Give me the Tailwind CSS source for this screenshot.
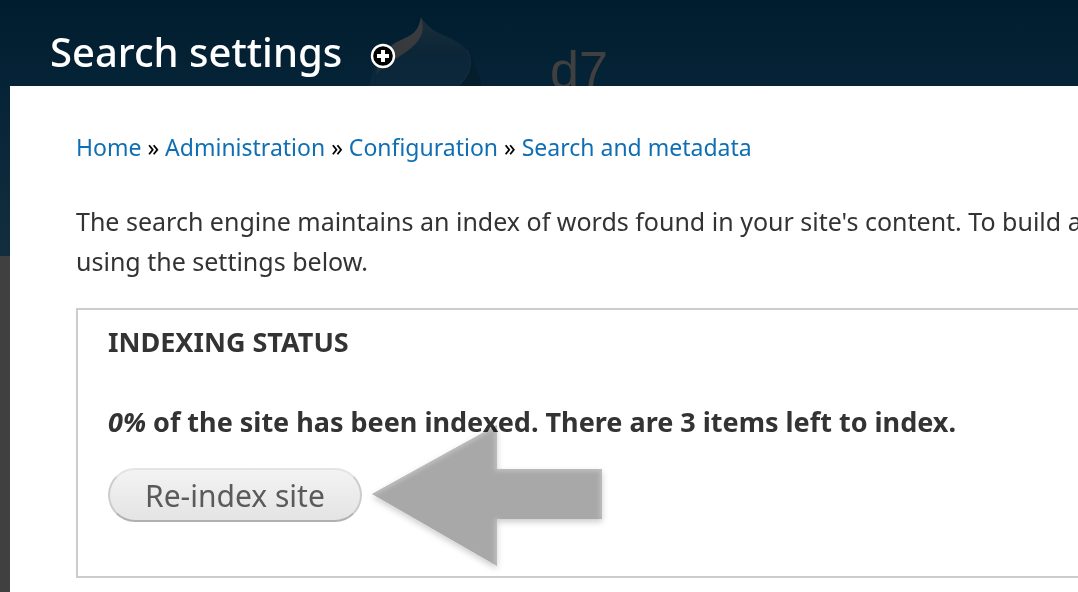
<!DOCTYPE html>
<html lang="en">
  <head>
    <meta charset="UTF-8" />
    <meta name="viewport" content="width=device-width, initial-scale=1.0" />
    <title>Search settings | d7</title>
    <script src="https://cdn.jsdelivr.net/npm/@tailwindcss/browser@4"></script>
  </head>
  <body class="bg-[#404040] font-['Noto_Sans','Open_Sans',sans-serif] text-[#333]">
    <div class="relative min-h-screen overflow-hidden">
      <!-- dimmed site behind the overlay -->
      <div
        class="absolute inset-x-0 top-0 h-64 bg-linear-to-b from-[#001d2e] via-[#062437] via-35% to-[#122e3e]"
        aria-hidden="true"
      >
        <svg class="absolute left-[368px] top-4" width="116" height="140" viewBox="0 0 116 140">
          <defs>
            <linearGradient id="drop" x1="0" y1="0" x2="0" y2="1">
              <stop offset="0" stop-color="#1d2e39" />
              <stop offset="0.25" stop-color="#0c2638" />
              <stop offset="1" stop-color="#0a2a42" />
            </linearGradient>
            <linearGradient id="shine" x1="1" y1="0" x2="0" y2="1">
              <stop offset="0" stop-color="#3a3d3f" />
              <stop offset="0.7" stop-color="#36393b" />
              <stop offset="1" stop-color="#132b3a" />
            </linearGradient>
          </defs>
          <path
            d="M53 1C55 5 59 9 64 13C71 18 76 19 82 22C89 26 95 29 99 34C103 39 106 46 107 51C112 58 114 65 114 76C112 112 90 138 57 138C24 138 1 112 1 74C2 62 5 53 12 44C17 36 21 31 27 27C36 22 46 20 50 11C52 7 52 4 53 1Z"
            fill="url(#drop)"
          />
          <path
            d="M99 34C103 39 106 46 107 51C112 58 114 65 114 76H86C96 66 102 57 102 47C102 42 101 38 99 34Z"
            fill="#051e2e"
          />
          <path
            d="M99 34C102 40 103 45 102 50C101 57 97 63 92 68"
            fill="none"
            stroke="#1c303d"
            stroke-width="1"
          />
          <path
            d="M53 2C55 7 55 12 54 17C52 23 48 28 43 32C37 37 32 40 27 43C20 47 14 51 8 60C9 51 10 47 12 44C17 36 21 31 27 27C36 22 46 20 50 11C52 7 52 5 53 2Z"
            fill="url(#shine)"
          />
        </svg>
        <div
          class="absolute left-[550px] top-10 font-['Liberation_Sans',Arial,sans-serif] text-[52px] leading-[60px] text-[#404040]"
        >
          d7
        </div>
      </div>

      <div class="relative flex min-h-screen flex-col">
        <header class="flex items-end gap-7 px-[50px] pt-[25px] pb-[7px]">
          <h1 class="text-[40px] leading-[54px] font-medium text-white">Search settings</h1>
          <button type="button" class="mb-[10px]" aria-label="Add to shortcuts">
            <svg width="26" height="26" viewBox="0 0 26 26">
              <circle cx="13" cy="13" r="11" fill="#000" stroke="#fff" stroke-width="2.4" />
              <path d="M11 7h4v4h4v4h-4v4h-4v-4H7v-4h4z" fill="#fff" />
            </svg>
          </button>
        </header>

        <main class="ml-[10px] grow bg-white pl-[66px] pt-[43px]">
          <nav class="text-[23px] leading-9 whitespace-nowrap text-black" aria-label="Breadcrumb">
            <a href="#" class="text-[#0f6fb4]">Home</a> »
            <a href="#" class="text-[#0f6fb4]">Administration</a> »
            <a href="#" class="text-[#0f6fb4]">Configuration</a> »
            <a href="#" class="text-[#0f6fb4]">Search and metadata</a>
          </nav>

          <p class="mt-9 text-[25px] leading-10 whitespace-nowrap">
            The search engine maintains an index of words found in your site's content. To build a
            <br />using the settings below.
          </p>

          <section
            class="mt-[27px] border-2 border-r-0 border-[#ccc] pt-[14px] pb-[54px] pl-[30px]"
            aria-labelledby="status"
          >
            <h2 id="status" class="text-[27px] leading-9 font-bold uppercase">Indexing status</h2>
            <p class="mt-11 text-[27px] leading-9 font-bold whitespace-nowrap">
              <em>0%</em> of the site has been indexed. There are 3 items left to index.
            </p>
            <div class="relative mt-7">
              <button
                type="button"
                class="rounded-full border-2 border-[#ccc] border-t-[#e4e4e4] border-b-[#b0b0b0] bg-linear-to-b from-[#f3f3f3] to-[#e4e4e4] px-[35px] pt-2 pb-[6px] text-[30px] leading-9 text-[#5a5a5a]"
              >
                Re-index site
              </button>
              <svg
                class="absolute -top-[45px] left-[258px] mix-blend-multiply"
                width="244"
                height="156"
                viewBox="0 0 244 156"
                aria-hidden="true"
              >
                <defs>
                  <filter id="shadow" x="-10%" y="-10%" width="120%" height="120%">
                    <feDropShadow dx="0" dy="3" stdDeviation="3" flood-color="#000" flood-opacity="0.2" />
                  </filter>
                  <filter id="soft"><feGaussianBlur stdDeviation="2" /></filter>
                  <clipPath id="arrow">
                    <path d="M6 71L131 2V46H236V96H131V143Z" />
                  </clipPath>
                </defs>
                <path d="M6 71L131 2V46H236V96H131V143Z" fill="#a8a8a8" filter="url(#shadow)" />
                <g clip-path="url(#arrow)">
                  <path
                    d="M6 71L131 2V46H236V96M131 96V143"
                    fill="none"
                    stroke="#c4c4c4"
                    stroke-width="4"
                    filter="url(#soft)"
                  />
                </g>
              </svg>
            </div>
          </section>
        </main>
      </div>
    </div>
  </body>
</html>
